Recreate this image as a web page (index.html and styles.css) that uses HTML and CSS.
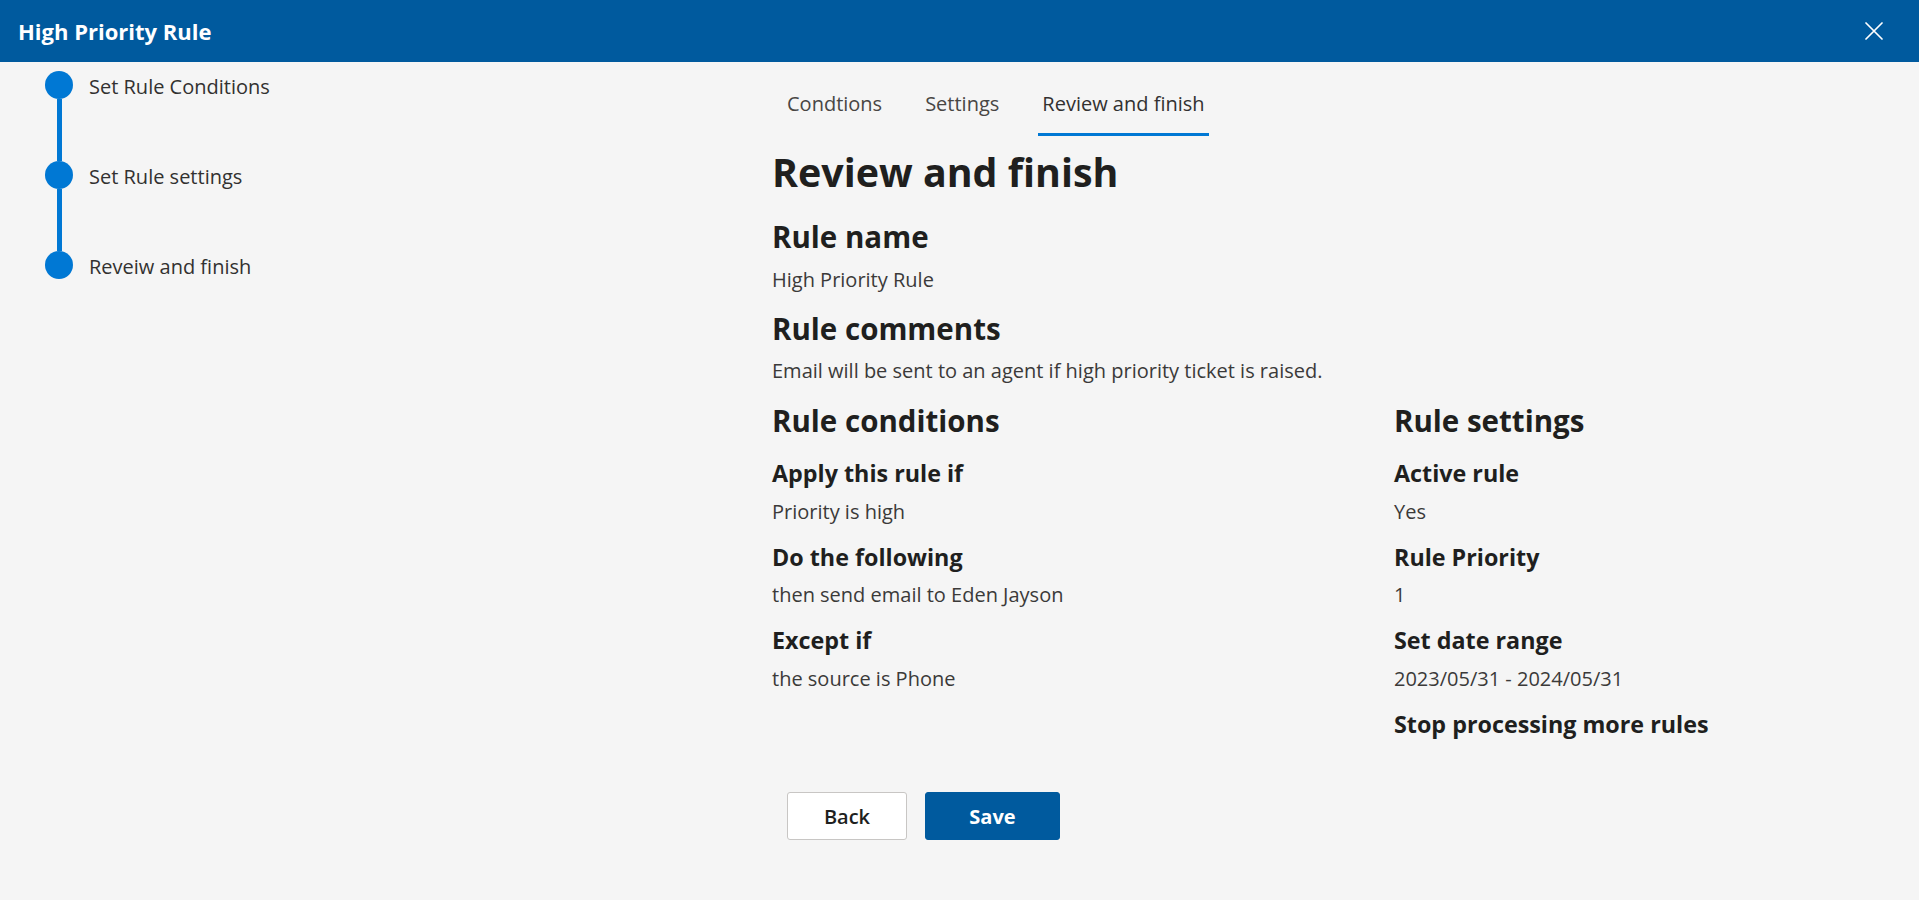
FILE: index.html
```html
<!DOCTYPE html>
<html lang="en">
<head>
<meta charset="utf-8">
<title>High Priority Rule</title>
<link rel="stylesheet" href="styles.css">
</head>
<body>
<header class="topbar">
  <h1 class="topbar-title">High Priority Rule</h1>
  <button class="close-btn" aria-label="Close">
    <svg width="18" height="18" viewBox="0 0 18 18"><path d="M1 1 L17 17 M17 1 L1 17" stroke="#fff" stroke-width="1.7" fill="none" stroke-linecap="round"/></svg>
  </button>
</header>
<div class="layout">
  <aside class="stepper">
    <div class="step">
      <div class="rail"><span class="dot"></span><span class="line"></span></div>
      <span class="step-label">Set Rule Conditions</span>
    </div>
    <div class="step">
      <div class="rail"><span class="dot"></span><span class="line"></span></div>
      <span class="step-label">Set Rule settings</span>
    </div>
    <div class="step step-last">
      <div class="rail"><span class="dot"></span></div>
      <span class="step-label">Reveiw and finish</span>
    </div>
  </aside>
  <main class="content">
    <nav class="tabs">
      <span class="tab">Condtions</span>
      <span class="tab">Settings</span>
      <span class="tab tab-active">Review and finish</span>
    </nav>
    <h2 class="page-title">Review and finish</h2>

    <h3 class="section-title first">Rule name</h3>
    <p class="value value-section">High Priority Rule</p>

    <h3 class="section-title">Rule comments</h3>
    <p class="value value-section-tight">Email will be sent to an agent if high priority ticket is raised.</p>

    <div class="columns">
      <div class="col">
        <h3 class="section-title flush">Rule conditions</h3>
        <h4 class="field-label">Apply this rule if</h4>
        <p class="value">Priority is high</p>
        <h4 class="field-label">Do the following</h4>
        <p class="value value-tight">then send email to Eden Jayson</p>
        <h4 class="field-label">Except if</h4>
        <p class="value">the source is Phone</p>
      </div>
      <div class="col">
        <h3 class="section-title flush">Rule settings</h3>
        <h4 class="field-label">Active rule</h4>
        <p class="value">Yes</p>
        <h4 class="field-label">Rule Priority</h4>
        <p class="value value-tight">1</p>
        <h4 class="field-label">Set date range</h4>
        <p class="value">2023/05/31 - 2024/05/31</p>
        <h4 class="field-label">Stop processing more rules</h4>
      </div>
    </div>

    <div class="actions">
      <button class="btn btn-secondary">Back</button>
      <button class="btn btn-primary">Save</button>
    </div>
  </main>
</div>
</body>
</html>
```

FILE: styles.css
```css
* {
  box-sizing: border-box;
}

html, body {
  margin: 0;
  padding: 0;
}

body {
  background: #f5f5f5;
  font-family: "Open Sans", "Noto Sans", "Liberation Sans", sans-serif;
  color: #323130;
  min-height: 900px;
}

.topbar {
  height: 62px;
  background: #005a9e;
  display: flex;
  align-items: center;
  justify-content: space-between;
  padding: 0 36px 0 18px;
}

.topbar-title {
  margin: 0;
  color: #ffffff;
  font-size: 22px;
  font-weight: 700;
  line-height: 62px;
}

.close-btn {
  background: none;
  border: 0;
  padding: 0;
  width: 18px;
  height: 18px;
  display: flex;
  cursor: pointer;
}

.layout {
  display: flex;
}

.stepper {
  width: 772px;
  flex: none;
  padding: 9px 0 0 45px;
}

.step {
  display: flex;
  height: 90px;
}

.step-last {
  height: 28px;
}

.rail {
  width: 28px;
  display: flex;
  flex-direction: column;
  align-items: center;
}

.dot {
  width: 28px;
  height: 28px;
  border-radius: 50%;
  background: #0078d4;
  flex: none;
}

.line {
  width: 5px;
  flex: 1;
  background: #0078d4;
}

.step-label {
  margin-left: 16px;
  font-size: 20px;
  line-height: 28px;
  padding-top: 2px;
  color: #323130;
}

.content {
  flex: 1;
  min-width: 0;
}

.tabs {
  display: flex;
  gap: 35px;
  margin: 28px 0 0 11px;
}

.tab {
  font-size: 20px;
  line-height: 28px;
  padding: 0 4px 15px;
  border-bottom: 3px solid transparent;
  color: #484644;
}

.tab-active {
  border-bottom-color: #0078d4;
  color: #323130;
}

.page-title {
  margin: 10px 0 0;
  font-size: 39.4px;
  line-height: 52px;
  font-weight: 700;
  color: #201f1e;
}

.section-title {
  margin: 15px 0 0;
  font-size: 29.5px;
  line-height: 40px;
  font-weight: 700;
  color: #201f1e;
}

.section-title.first {
  margin-top: 19px;
}

.section-title.flush {
  margin-top: 0;
}

.field-label {
  margin: 16px 0 0;
  font-size: 23.3px;
  line-height: 32px;
  font-weight: 700;
  color: #201f1e;
}

.col .value + .field-label {
  margin-top: 15px;
}

.value {
  margin: 9px 0 0;
  font-size: 20px;
  line-height: 28px;
  color: #3b3a39;
}

.value-tight {
  margin-top: 8px;
}

.value-section {
  margin-top: 9px;
}

.value-section-tight {
  margin-top: 8px;
}

.columns {
  display: grid;
  grid-template-columns: 622px 1fr;
  margin-top: 16px;
}

.actions {
  display: flex;
  gap: 18px;
  margin: 52px 0 0 15px;
}

.btn {
  height: 48px;
  font-family: inherit;
  font-size: 20px;
  font-weight: 600;
  border-radius: 3px;
  padding: 0;
  cursor: pointer;
}

.btn-secondary {
  width: 120px;
  background: #ffffff;
  border: 1px solid #c8c6c4;
  color: #201f1e;
}

.btn-primary {
  width: 135px;
  background: #005a9e;
  border: 1px solid #005a9e;
  color: #ffffff;
  font-weight: 700;
}
```
